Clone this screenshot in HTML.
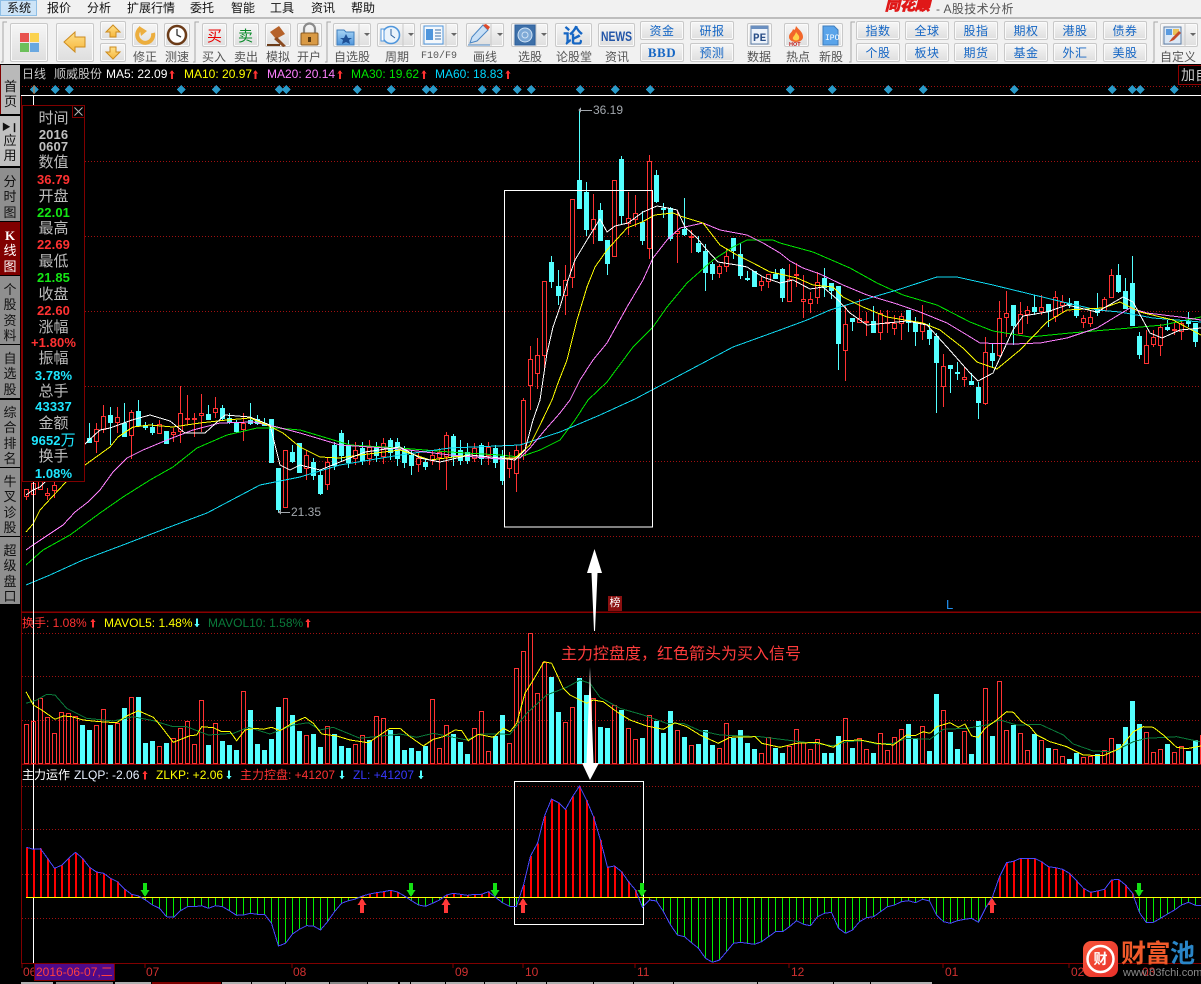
<!DOCTYPE html>
<html lang="zh"><head><meta charset="utf-8"><title>同花顺 - A股技术分析</title>
<style>
html,body{margin:0;padding:0;background:#000;width:1201px;height:984px;overflow:hidden}
body{position:relative;font-family:"Liberation Sans","WenQuanYi Zen Hei","Noto Sans CJK SC",sans-serif;font-size:12px}
#top{position:absolute;left:0;top:0;width:1201px;height:64px;background:#f1f1f1;overflow:hidden}
.m{position:absolute;top:1px;font-size:12px;line-height:14px;color:#111}
.hl{position:absolute;left:0;top:0;width:37px;height:16px;background:#cde4f7;border:1px solid #8fbfe6;box-sizing:border-box}
.b{position:absolute;box-sizing:border-box;border:1px solid #c9c9c9;border-radius:2px;background:linear-gradient(#f6f6f6,#dedede);box-shadow:inset 0 0 0 1px #fafafa}
.t{color:#1566c4;font-size:12px;line-height:19px;text-align:center;height:19px;width:44px;letter-spacing:.5px}
.l{position:absolute;top:50px;width:60px;text-align:center;font-size:12px;line-height:14px;color:#555}
.txt{position:absolute;white-space:nowrap;line-height:14px;font-size:12px}
.side{position:absolute;left:0;width:20px;box-sizing:border-box;text-align:center;color:#111;font-size:13px;line-height:15.3px;background:#8f8f8f;padding-top:6px}
.p,.n{position:absolute;left:22px;width:63px;text-align:center;white-space:nowrap}
.p{font-size:15px;line-height:16px;color:#bdbdbd}
.n{font-size:13px;line-height:14px;font-weight:bold;letter-spacing:.1px}
.r{color:#ff3232}.g{color:#14e614}.c{color:#1ee6ff}.w{color:#c0c0c0}
svg{position:absolute;left:0;top:0}
</style></head><body>
<svg id="chart" width="1201" height="984" shape-rendering="crispEdges"></svg>

<div id="top">
<div class="hl"></div>
<div class="m" style="left:7px">系统</div><div class="m" style="left:47px">报价</div><div class="m" style="left:87px">分析</div><div class="m" style="left:127px">扩展行情</div><div class="m" style="left:190px">委托</div><div class="m" style="left:231px">智能</div><div class="m" style="left:270px">工具</div><div class="m" style="left:311px">资讯</div><div class="m" style="left:351px">帮助</div>
<div style="position:absolute;left:885px;top:-2px;width:48px;height:15px;color:#e01818;-webkit-text-stroke:1px #e01818;font:italic bold 15px/16px 'Liberation Sans','WenQuanYi Zen Hei','Noto Sans CJK SC',sans-serif;white-space:nowrap;overflow:hidden">同花顺</div>
<div class="txt" style="left:936px;top:2px;color:#555;letter-spacing:.4px">- A股技术分析</div>
<div style="position:absolute;left:0;top:17px;width:1201px;height:2px;background:#bdbdbd"></div>

<div class="b" style="left:10px;top:23px;width:38px;height:39px"></div>
<div class="b" style="left:56px;top:23px;width:38px;height:39px"></div>
<div class="b" style="left:100px;top:21px;width:26px;height:19px"></div>
<div class="b" style="left:100px;top:43px;width:26px;height:19px"></div>
<div class="b" style="left:132px;top:23px;width:26px;height:24px"></div>
<div class="b" style="left:164px;top:23px;width:26px;height:24px"></div>
<div class="b" style="left:202px;top:23px;width:25px;height:24px"></div>
<div class="b" style="left:233px;top:23px;width:26px;height:24px"></div>
<div class="b" style="left:265px;top:23px;width:26px;height:24px"></div>
<div class="b" style="left:297px;top:23px;width:25px;height:24px"></div>
<div class="b" style="left:333px;top:23px;width:38px;height:24px"></div>
<div class="b" style="left:377px;top:23px;width:38px;height:24px"></div>
<div class="b" style="left:420px;top:23px;width:38px;height:24px"></div>
<div class="b" style="left:466px;top:23px;width:38px;height:24px"></div>
<div class="b" style="left:511px;top:23px;width:37px;height:24px"></div>
<div class="b" style="left:555px;top:23px;width:37px;height:24px"></div>
<div class="b" style="left:598px;top:23px;width:37px;height:24px"></div>
<div class="b t" style="left:640px;top:21px">资金</div>
<div class="b t" style="left:640px;top:43px;font:bold 13px/18px 'Liberation Serif',serif">BBD</div>
<div class="b t" style="left:690px;top:21px">研报</div>
<div class="b t" style="left:690px;top:43px">预测</div>
<div class="b" style="left:747px;top:23px;width:25px;height:24px"></div>
<div class="b" style="left:784px;top:23px;width:25px;height:24px"></div>
<div class="b" style="left:818px;top:23px;width:25px;height:24px"></div>
<div class="b t" style="left:856px;top:21px">指数</div><div class="b t" style="left:905px;top:21px">全球</div><div class="b t" style="left:954px;top:21px">股指</div><div class="b t" style="left:1004px;top:21px">期权</div><div class="b t" style="left:1053px;top:21px">港股</div><div class="b t" style="left:1103px;top:21px">债券</div>
<div class="b t" style="left:856px;top:43px">个股</div><div class="b t" style="left:905px;top:43px">板块</div><div class="b t" style="left:954px;top:43px">期货</div><div class="b t" style="left:1004px;top:43px">基金</div><div class="b t" style="left:1053px;top:43px">外汇</div><div class="b t" style="left:1103px;top:43px">美股</div>
<div class="b" style="left:1160px;top:23px;width:38px;height:24px"></div>

<div class="l" style="left:115px">修正</div><div class="l" style="left:147px">测速</div><div class="l" style="left:184px">买入</div><div class="l" style="left:216px">卖出</div><div class="l" style="left:248px">模拟</div><div class="l" style="left:279px">开户</div>
<div class="l" style="left:322px">自选股</div><div class="l" style="left:367px">周期</div><div class="l" style="left:409px;font:10px/14px 'Liberation Mono',monospace">F10/F9</div><div class="l" style="left:455px">画线</div><div class="l" style="left:500px">选股</div><div class="l" style="left:544px">论股堂</div><div class="l" style="left:587px">资讯</div><div class="l" style="left:729px">数据</div><div class="l" style="left:768px">热点</div><div class="l" style="left:801px">新股</div><div class="l" style="left:1148px">自定义</div>

<svg width="1201" height="64">
<defs><linearGradient id="yl" x1="0" y1="0" x2="0" y2="1"><stop offset="0" stop-color="#ffe08a"/><stop offset="1" stop-color="#f6b73c"/></linearGradient>
<linearGradient id="bl" x1="0" y1="0" x2="0" y2="1"><stop offset="0" stop-color="#a8d4f5"/><stop offset="1" stop-color="#4f96dc"/></linearGradient></defs>
<g fill="none" stroke="#a8a8a8"><path d="M7 22H3V62H1M193 62H195V22H199M325 62H327V22H331M849 62H851V22H855M1152 62H1154V22H1158"/></g>
<rect x="20" y="33" width="9" height="9" fill="#e8534f"/><rect x="30" y="33" width="9" height="9" fill="#fbd24e"/><rect x="20" y="43" width="9" height="9" fill="#6cc05a"/><rect x="30" y="43" width="9" height="9" fill="#6aa8e0"/>
<path d="M64 42L75 32V37H85V47H75V52Z" fill="url(#yl)" stroke="#cc8b1e"/>
<path d="M113 25L120 32H116V37H110V32H106Z" fill="url(#yl)" stroke="#cc8b1e"/>
<path d="M113 59L120 52H116V47H110V52H106Z" fill="url(#yl)" stroke="#cc8b1e"/>
<path d="M141 28A8 8 0 1 0 153 33" fill="none" stroke="#ecae3e" stroke-width="4"/><path d="M139 26L147 31L141 36Z" fill="#ecae3e"/>
<circle cx="177" cy="35" r="9" fill="#fff" stroke="#6b3b18" stroke-width="2.5"/><path d="M177 29V35L181 37" stroke="#333" fill="none" stroke-width="1.3"/>
<text x="207" y="41" font-size="15" fill="#e80000">买</text>
<text x="238" y="41" font-size="15" fill="#0a8a2a">卖</text>
<path d="M270 32L279 26L285 34L276 39Z" fill="#b6622a"/><path d="M277 37L286 46L283 47L274 39Z" fill="#8a4a20"/><rect x="267" y="44" width="13" height="2" fill="#6b3b18"/>
<path d="M304 33V29A5 5 0 0 1 315 29V33" fill="none" stroke="#8a8a8a" stroke-width="2.2"/><rect x="301" y="33" width="17" height="12" rx="1" fill="#d99a45" stroke="#8a5a20"/><rect x="308" y="37" width="3" height="5" fill="#5a3a10"/>
<path d="M337 30H344L346 32H354V45H337Z" fill="url(#bl)" stroke="#3d7dbd"/><path d="M346 34L348 38H352L349 40L350 44L346 42L342 44L343 40L340 38H344Z" fill="#1e4f95"/>
<path d="M364 33H370L367 36Z M408 33H414L411 36Z M451 33H457L454 36Z M497 33H503L500 36Z M541 33H547L544 36Z M1190 33H1196L1193 36Z" fill="#666"/>
<path d="M359 24V46M403 24V46M446 24V46M491 24V46M536 24V46M1185 24V46" stroke="#c9c9c9"/>
<circle cx="391" cy="35" r="8.5" fill="#eaf3fb" stroke="#4f96dc" stroke-width="1.6"/><path d="M391 29V35L395 38" stroke="#2c5f9d" fill="none"/><rect x="381" y="29" width="3" height="12" fill="#fff" stroke="#4f96dc"/>
<rect x="424" y="26" width="19" height="18" fill="#f4f8fc" stroke="#4f96dc"/><rect x="426" y="29" width="7" height="11" fill="#4f96dc"/><path d="M435 30H441M435 33H441M435 36H441M435 39H441" stroke="#3d6fa8"/>
<path d="M470 43L472 37L483 25L488 30L477 41Z" fill="#c9e0f6" stroke="#4a86c4"/><path d="M483 25L488 30L490 27L486 24Z" fill="#e04a2a"/><path d="M468 45H490" stroke="#4a86c4"/>
<rect x="515" y="25" width="20" height="20" fill="#3d6fa8" stroke="#2c5f9d"/><circle cx="525" cy="35" r="7" fill="#7ea9d6" stroke="#cfe2f5"/><circle cx="525" cy="35" r="3" fill="none" stroke="#cfe2f5"/>
<text x="563" y="43" font-size="20" font-weight="bold" fill="#1566c4">论</text>
<text x="601" y="41" font-family="Liberation Sans" font-size="14" font-weight="bold" fill="#2255a8" textLength="31" lengthAdjust="spacingAndGlyphs">NEWS</text>
<path d="M751 26H768V44H751Z" fill="#eef3fa" stroke="#5f7fa8"/><rect x="751" y="26" width="17" height="3" fill="#6a8fc0"/><text x="753" y="41" font-family="Liberation Mono" font-size="11" font-weight="bold" fill="#2a4f88">PE</text>
<path d="M796 26C799 30 803 32 803 37C803 40 800 42 796 42C792 42 789 40 789 37C789 33 792 33 793 29C794 30 795 31 796 26Z" fill="#f2672a"/><path d="M796 32C798 35 800 36 799 39C798 41 794 41 793 39C792 37 795 36 796 32Z" fill="#ffd24a"/><text x="789" y="46" font-family="Liberation Sans" font-size="5.5" font-weight="bold" fill="#c02020">HOT</text>
<path d="M823 26H834L838 30V45H823Z" fill="#5aa4ea" stroke="#3d7dbd"/><text x="825" y="40" font-family="Liberation Mono" font-size="8" fill="#fff">IPO</text>
<rect x="1164" y="27" width="17" height="17" fill="#dce8f5" stroke="#5f7fa8"/><rect x="1166" y="29" width="6" height="6" fill="#5a9be0"/><rect x="1173" y="29" width="6" height="6" fill="#e9c25a"/><path d="M1169 42L1172 38L1179 31L1181 33L1174 40Z" fill="#c44a2a"/>
</svg>
</div>

<div class="side" style="top:65px;height:49px;background:#b9b9b9;border-left:1px solid #800000;padding-top:14px">首<br>页</div>
<div class="side" style="top:116px;height:50px;background:#c0c0c0;padding-top:5px"><span style="font-size:9px;line-height:12px;display:block">▶❙</span>应<br>用</div>
<div class="side" style="top:168px;height:53px">分<br>时<br>图</div>
<div class="side" style="top:222px;height:53px;background:#800000;color:#fff"><b style="font-family:'Liberation Serif',serif">K</b><br>线<br>图</div>
<div class="side" style="top:276px;height:68px">个<br>股<br>资<br>料</div>
<div class="side" style="top:345px;height:53px">自<br>选<br>股</div>
<div class="side" style="top:400px;height:67px;padding-top:5px">综<br>合<br>排<br>名</div>
<div class="side" style="top:468px;height:68px">牛<br>叉<br>诊<br>股</div>
<div class="side" style="top:537px;height:67px">超<br>级<br>盘<br>口</div>

<div class="txt" style="left:22px;top:67px;color:#c8c8c8">日线</div>
<div class="txt" style="left:54px;top:67px;color:#c8c8c8">顺威股份</div>
<div class="txt" style="left:106px;top:67px;color:#fff">MA5: 22.09</div>
<div class="txt" style="left:184px;top:67px;color:#ffff00">MA10: 20.97</div>
<div class="txt" style="left:267px;top:67px;color:#ff80ff">MA20: 20.14</div>
<div class="txt" style="left:351px;top:67px;color:#00e600">MA30: 19.62</div>
<div class="txt" style="left:435px;top:67px;color:#00d8ff">MA60: 18.83</div>
<div style="position:absolute;left:1178px;top:65px;width:30px;height:20px;box-sizing:border-box;border:1px solid #900000;color:#c8c8c8;font-size:14px;line-height:18px;padding-left:2px;white-space:nowrap;overflow:hidden">加自</div>

<div class="txt" style="left:22px;top:616px;color:#ff3232">换手: 1.08%</div>
<div class="txt" style="left:104px;top:616px;color:#ffff00">MAVOL5: 1.48%</div>
<div class="txt" style="left:208px;top:616px;color:#0a7a3a">MAVOL10: 1.58%</div>
<div class="txt" style="left:22px;top:768px;color:#fff">主力运作</div>
<div class="txt" style="left:74px;top:768px;color:#e8f0ff">ZLQP: -2.06</div>
<div class="txt" style="left:156px;top:768px;color:#ffff00">ZLKP: +2.06</div>
<div class="txt" style="left:240px;top:768px;color:#ff3232">主力控盘: +41207</div>
<div class="txt" style="left:353px;top:768px;color:#3838ff">ZL: +41207</div>

<div class="txt" style="left:593px;top:103px;color:#a3a8ae">36.19</div>
<div class="txt" style="left:291px;top:505px;color:#a3a8ae">21.35</div>
<div style="position:absolute;left:608px;top:596px;width:14px;height:15px;background:#8a1010;color:#fff;font-size:11px;line-height:15px;text-align:center">榜</div>
<div class="txt" style="left:946px;top:598px;color:#2090f0;font-size:13px">L</div>
<div class="txt" style="left:561px;top:646px;color:#ff3c3c;font-size:16px;line-height:18px">主力控盘度，红色箭头为买入信号</div>

<div style="position:absolute;left:22px;top:105px;width:63px;height:377px;background:#000;border:1px solid #800000;box-sizing:border-box"></div>
<svg width="1201" height="984" style="pointer-events:none"><path d="M72.5 105.5H84.5V117.5H72.5Z" fill="none" stroke="#800000"/><path d="M74.5 107.5L82.5 115.5M82.5 107.5L74.5 115.5" stroke="#bbb" fill="none"/></svg>
<div class="p" style="top:111px">时间</div><div class="n w" style="top:128px">2016</div><div class="n w" style="top:140px">0607</div>
<div class="p" style="top:155px">数值</div><div class="n r" style="top:173px">36.79</div>
<div class="p" style="top:189px">开盘</div><div class="n g" style="top:206px">22.01</div>
<div class="p" style="top:221px">最高</div><div class="n r" style="top:238px">22.69</div>
<div class="p" style="top:254px">最低</div><div class="n g" style="top:271px">21.85</div>
<div class="p" style="top:287px">收盘</div><div class="n r" style="top:304px">22.60</div>
<div class="p" style="top:320px">涨幅</div><div class="n r" style="top:336px">+1.80%</div>
<div class="p" style="top:351px">振幅</div><div class="n c" style="top:369px">3.78%</div>
<div class="p" style="top:384px">总手</div><div class="n c" style="top:400px">43337</div>
<div class="p" style="top:416px">金额</div><div class="n c" style="top:434px">9652<span style="font-weight:normal;font-size:15px">万</span></div>
<div class="p" style="top:449px">换手</div><div class="n c" style="top:467px">1.08%</div>

<div class="txt" style="left:23px;top:965px;color:#d03030">06</div>
<div style="position:absolute;left:34px;top:963px;width:81px;height:18px;box-sizing:border-box;background:#4f0a8a;border:1px solid #800000;color:#ff4040;font-size:12px;line-height:16px;white-space:nowrap;padding-left:1px">2016-06-07,二</div>
<div class="txt" style="left:146px;top:965px;color:#d03030">07</div><div class="txt" style="left:293px;top:965px;color:#d03030">08</div><div class="txt" style="left:455px;top:965px;color:#d03030">09</div><div class="txt" style="left:525px;top:965px;color:#d03030">10</div><div class="txt" style="left:637px;top:965px;color:#d03030">11</div><div class="txt" style="left:791px;top:965px;color:#d03030">12</div><div class="txt" style="left:945px;top:965px;color:#d03030">01</div><div class="txt" style="left:1071px;top:965px;color:#d03030">02</div><div class="txt" style="left:1142px;top:965px;color:#d03030">03</div>

<svg width="1201" height="984" style="pointer-events:none">
<defs><linearGradient id="wm" x1="0" y1="0" x2="1" y2="1"><stop offset="0" stop-color="#f8563a"/><stop offset="1" stop-color="#e8302a"/></linearGradient></defs>
<rect x="1083" y="941" width="35" height="36" rx="8" fill="url(#wm)"/>
<circle cx="1100.5" cy="959" r="13" fill="none" stroke="#fff" stroke-width="2.5"/>
<text x="1100.5" y="964" text-anchor="middle" font-size="14" font-weight="bold" fill="#fff">财</text>
</svg>
<div style="position:absolute;left:1121px;top:939px;font-size:25px;line-height:30px;font-weight:bold;white-space:nowrap;letter-spacing:-.5px;color:#f05a2a">财富<span style="color:#2a86c8">池</span></div>
<div class="txt" style="left:1123px;top:966px;color:#8a8a8a;font-size:11px">www.03fchi.com</div>

<script>
const X=i=>26.5+7*i,RED='#ff3232',CY='#54ffff';let s='';
const dot=(y,x0=22)=>`<path d="M${x0} ${y+.5}H1201" stroke="#a01010" stroke-dasharray="1 2" fill="none"/>`;
[161,236,311,386,461,536,86,633,676,720,786,829,874,918].forEach(y=>s+=dot(y));
const C=[[1,489,496,489,500],[1,483,494,480,500],[1,475,489,470,490],[1,493,495,488,500],[1,485,490,482,498],[1,470,478,465,481],[1,460,470,455,475],[1,450,460,445,465],[1,445,455,440,458],
[0,438,442,423,443],[1,429,441,423,453],[1,416,429,405,433],[0,415,422,407,445],[1,417,422,407,433],[0,423,436,403,436],[1,412,435,410,459],[0,411,425,400,425],[0,425,427,422,430],[0,427,432,423,435],[1,424,433,420,433],[0,431,443,431,443],[1,432,434,428,442],[1,413,431,386,443],[1,418,419,395,425],[1,418,419,413,437],[1,413,415,394,432],[0,414,419,405,420],[1,408,412,397,418],[0,408,418,405,420],[0,418,422,413,424],[0,423,431,420,433],[1,423,429,413,441],[0,420,423,403,425],[0,419,423,415,425],[0,423,425,418,425],[0,419,462,419,462],[0,468,509,468,513],[1,450,507,450,507],[0,452,461,445,463],[0,443,472,443,472],
[1,455,468,450,480],[0,462,475,458,480],[0,475,493,470,495],[1,462,484,458,490],[0,445,465,442,470],[0,433,455,430,462],[0,445,462,440,468],[1,450,458,442,465],[0,448,460,442,465],[1,447,458,440,465],[0,448,455,442,462],[1,443,456,438,464],[0,440,452,438,460],[0,442,458,438,466],[0,450,462,446,468],[0,455,465,450,475],[1,458,464,452,472],[0,462,466,458,470],[1,455,460,450,465],[1,452,457,448,470],[1,435,456,432,490],[0,436,456,434,466],[0,450,460,440,465],[0,452,460,443,464],[1,448,458,443,462],[0,445,458,443,465],[1,447,455,442,465],[0,448,462,445,468],[0,456,480,450,485],[1,458,468,452,478],[1,450,473,445,492],[1,400,455,398,460],
[1,359,385,346,410],[1,355,373,338,389],[1,281,355,281,369],[0,262,281,256,288],[0,286,295,270,305],[1,280,295,265,315],[1,199,277,199,288],[0,180,208,110,208],[0,192,229,182,236],[1,219,229,194,244],[0,210,240,203,240],[0,240,263,240,275],[1,180,256,180,256],[0,159,215,156,224],[1,218,223,192,235],[1,213,219,195,227],[0,222,240,211,245],[1,161,248,155,259],[0,175,201,170,203],[0,208,209,203,218],[0,208,238,207,241],[1,231,233,210,263],[0,229,234,198,236],[1,236,237,230,253],[0,243,251,236,253],[0,251,272,244,291],[0,264,273,262,280],[1,266,273,264,278],[1,256,266,248,272],[0,238,250,238,259],[0,254,275,243,279],[0,278,279,271,281],[0,271,286,271,286],[1,281,285,277,291],[1,274,281,274,288],[0,274,278,269,278],
[0,269,297,268,302],[1,279,301,264,301],[1,274,275,263,287],[1,299,301,275,318],[1,299,303,292,313],[1,282,297,272,304],[0,278,287,268,297],[0,283,290,283,299],[0,286,343,286,370],[1,324,350,305,381],[0,318,321,318,331],[1,318,322,299,322],[1,321,322,312,336],[0,321,332,306,332],[1,313,332,310,340],[1,322,323,310,333],[1,323,328,315,335],[1,316,323,313,340],[0,310,322,310,332],[0,323,331,317,346],[1,323,331,305,340],[0,330,338,323,345],[0,336,362,333,413],[1,366,386,354,407],[0,365,368,365,393],[0,372,373,362,380],[1,377,379,367,387],[0,381,384,373,384],[0,387,402,382,419],[1,352,403,337,405],[0,353,360,344,368],[1,318,355,301,357],[1,313,317,291,337],[0,305,325,305,345],[1,314,333,302,333],[1,310,314,306,324],[0,307,311,295,315],[1,307,311,295,315],[0,304,311,304,327],[1,297,316,291,322],[1,302,305,295,313],[0,303,304,298,308],[0,301,315,301,318],[1,318,322,315,328],[1,317,323,311,327],[0,309,312,293,316],[1,299,310,297,310],[1,275,297,269,297],[0,275,291,264,293],[0,291,308,278,308],[0,283,325,256,325],[0,336,354,332,359],[1,345,363,330,363],[1,337,344,330,347],[1,327,345,324,356],[0,327,329,320,331],[1,329,330,322,335],[1,323,331,321,340],[0,321,323,312,327],[0,323,341,323,347]];
C.forEach((c,i)=>{const x=X(i),col=c[0]?RED:CY;
 s+=`<path d="M${x} ${c[3]}V${c[1]}M${x} ${c[2]}V${c[4]}" stroke="${col}" fill="none"/>`;
 if(c[0])s+=`<rect x="${x-2}" y="${c[1]+.5}" width="4" height="${c[2]-c[1]}" fill="#000" stroke="${col}"/>`;
 else s+=`<rect x="${x-2.5}" y="${c[1]}" width="5" height="${c[2]-c[1]+1}" fill="${col}"/>`;});
const line=(a,col)=>{let p='';for(let k=0;k<a.length;k+=2)p+=a[k]+','+a[k+1]+' ';return `<polyline points="${p}" fill="none" stroke="${col}" stroke-width="1"/>`};
s+=line([26,565,43,550,70,535,100,513,123,497,150,480,173,467,197,448,227,435,257,428,277,428,300,430,350,445,400,448,450,452,500,455,520,457,540,450,560,440,575,420,588,400,607,382,633,347,653,327,667,307,687,283,713,260,733,247,747,240,773,240,780,243,813,252,850,268,877,283,903,295,937,305,970,322,993,331,1030,337,1070,333,1130,328,1163,325,1201,317],'#00e600');
s+=line([26,585,50,575,83,560,123,545,167,528,207,513,260,485,300,477,340,465,400,455,450,448,520,445,560,432,600,415,635,399,652,390,733,347,780,330,807,320,830,310,863,300,897,290,937,277,957,277,993,285,1030,294,1063,302,1097,310,1120,312,1153,318,1201,322],'#10d8f0');
s+=line([26,550,33,545,48,535,63,525,75,512,88,502,100,490,113,472,127,458,143,450,167,440,193,430,220,423,253,422,277,427,300,433,340,445,400,449,450,455,500,459,520,458,530,448,545,430,560,413,570,400,580,380,593,360,607,343,627,307,643,280,653,258,667,240,680,228,703,223,720,230,747,235,763,243,780,253,790,261,803,268,820,274,843,285,867,295,897,304,920,312,947,323,967,335,980,343,1013,344,1040,343,1067,338,1097,328,1130,308,1147,313,1180,317,1201,320],'#ff80ff');
s+=line([26,532,33,524,40,510,65,483,85,465,110,447,118,437,133,427,150,425,173,427,200,423,227,420,250,418,267,425,283,433,300,447,320,457,340,458,360,455,400,450,430,460,470,455,500,458,515,458,530,445,540,425,552,400,558,383,567,360,577,320,587,287,595,267,607,250,627,228,642,222,655,215,673,213,683,217,703,223,720,245,737,255,753,263,770,272,780,274,797,278,813,285,833,287,843,297,863,307,887,317,923,323,940,330,963,348,977,362,997,369,1020,350,1047,322,1067,310,1103,308,1120,302,1140,312,1173,320,1201,335],'#ffff00');
s+=line([26,495,33,490,40,487,89,440,100,430,110,428,132,420,150,415,170,421,185,433,205,433,225,415,250,417,270,425,280,465,290,470,300,465,320,470,340,462,365,452,400,447,420,458,440,462,470,455,500,458,515,460,525,450,533,420,540,400,547,353,553,327,560,307,568,280,575,260,587,240,600,219,607,232,615,226,628,223,643,212,657,206,663,207,677,210,685,227,697,238,707,250,718,262,737,265,747,267,763,277,780,283,793,280,810,289,823,287,838,300,850,313,867,325,907,321,927,325,947,347,970,373,978,381,993,373,1013,330,1023,316,1047,312,1067,305,1097,312,1123,297,1133,302,1150,333,1162,338,1180,330,1201,328],'#ffffff');
s+=`<path d="M21.5 96V963M21 612.5H1201M21 764.5H1201M21 963.5H1201M145 963V968M292 963V968M453 963V968M523 963V968M635 963V968M789 963V968M943 963V968M1069 963V968M22 963V968" stroke="#800000" fill="none"/><path d="M21 612H1201M21 764H1201" stroke="#900000" fill="none"/>`;
s+=`<path d="M21 95.5H1201M33.5 96V963M504.5 190.5H652.5V527H504.5ZM514.5 781.5H643.5V924.5H514.5Z" stroke="#fff" fill="none"/>`;
[34,55,69,181,216,279,286,357,391,426,433,482,496,517,531,580,615,650,790,832,888,923,1014,1112,1132,1140,1174].forEach(x=>s+=`<path d="M${x} 85L${x+4.5} 89.5L${x} 94L${x-4.5} 89.5Z" fill="#2a9ac8"/>`);
s+=`<path d="M34 85V94" stroke="#e07830"/>`;
const V=[343,334,265,322,370,307,310,318,-345,-360,346,298,-345,340,-294,262,-261,-399,-393,409,-399,384,355,334,403,271,-405,340,-393,-405,-420,244,-300,-402,-420,-387,-291,265,-315,-363,376,-372,-411,349,-372,-408,-414,403,376,-390,319,325,-360,-377,-420,-414,-423,-408,268,415,346,-372,-396,-432,355,304,424,-378,-315,400,175,124,70,250,157,-201,-306,337,292,-204,-255,265,-351,-354,286,-300,355,388,-384,316,-334,-369,-303,361,-381,406,-402,-361,-405,415,340,-384,-360,-399,-417,430,382,-414,-429,408,358,397,418,388,-429,-429,-378,325,-414,385,418,-429,370,421,382,358,-342,-384,349,-423,-252,301,-366,-417,364,-432,-333,235,-378,214,361,-345,370,421,-372,391,-414,418,439,-447,-429,442,439,-433,421,385,-402,-351,-273,-342,367,427,418,-402,427,409,-423,-390,376];
V.forEach((v,i)=>{const x=X(i),t=Math.round(610+Math.abs(v)/3);
 if(v>0)s+=`<rect x="${x-2}" y="${t+.5}" width="4" height="${763-t}" fill="none" stroke="${RED}"/>`;
 else s+=`<rect x="${x-2.5}" y="${t}" width="5" height="${764-t}" fill="${CY}"/>`;});
const Z=(off,a)=>{let o=[];for(let k=0;k<a.length;k+=2)o.push(+(off+a[k]/3).toFixed(1),+(610+a[k+1]/3).toFixed(1));return o};
s+=line([...Z(0,[78,280,110,270,140,253,165,255,200,295,260,325,340,333,400,320,460,332,520,350,560,350,625,375,700,370,745,352,810,372,880,345,925,338,960,360,1000,352,1080,385,1200,372]),...Z(400,[50,382,100,370,200,390,240,372,330,373,380,310,440,255,500,232,540,210,570,220,600,262,660,295,730,315,800,340,850,340,900,362,960,375,1080,380,1200,395]),...Z(800,[100,407,140,395,190,392,230,402,280,400,320,385,390,388,430,358,500,355,560,345,600,330,650,345,720,343,790,375,820,402,880,423,940,425,1000,395,1040,385,1130,380,1200,395])],'#0a7a3a');
s+=line([...Z(0,[78,245,100,285,125,300,165,328,190,318,215,320,250,330,300,335,350,338,380,318,415,302,460,322,480,345,520,397,570,377,590,375,605,350,640,353,665,365,690,365,710,392,735,360,765,355,790,358,815,352,840,362,880,338,915,322,940,340,965,372,1010,378,1050,390,1105,398,1135,378,1170,355,1200,355]),...Z(400,[30,380,70,408,100,388,130,380,165,360,185,362,205,392,235,373,280,382,310,355,330,365,350,340,375,250,400,210,432,155,455,160,490,235,510,255,560,280,580,270,610,275,650,305,690,330,740,348,790,358,825,338,860,350,900,375,955,400,990,382,1065,380,1085,400,1140,412,1190,400]),...Z(800,[50,397,100,412,130,392,180,390,230,400,280,405,320,375,345,377,370,365,390,370,410,350,450,338,475,352,495,342,515,378,535,382,555,355,590,330,620,305,640,307,665,335,690,350,710,375,750,395,800,410,850,435,910,437,960,415,1000,365,1030,350,1060,352,1090,375,1130,412,1160,416,1203,408])],'#ffff00');
const L=[172,178,176,205,235,226,205,187,205,232,246,250,265,275,297,313,318,330,345,355,380,382,362,350,350,347,355,347,350,362,376,375,370,373,373,400,468,460,432,418,407,408,420,395,365,340,332,327,318,312,308,305,301,306,318,332,345,349,340,330,315,310,313,316,313,313,305,322,338,349,349,285,198,160,78,27,38,58,20,-12,30,80,150,232,228,245,275,300,352,330,333,365,405,435,440,458,475,505,517,510,485,460,457,460,463,455,440,425,425,410,392,403,407,380,370,367,415,430,420,395,383,380,365,350,345,335,332,338,328,333,375,395,400,392,388,385,397,355,320,260,218,214,205,205,205,215,230,233,238,250,272,295,307,303,298,270,268,285,310,368,398,397,385,372,360,345,337,346,346];
const Y=z=>790+z/3;let pts=[];
L.forEach((z,i)=>{const x=X(i);pts.push(x,+Y(z).toFixed(1));
 if(z<322)s+=`<rect x="${x-.5}" y="${Y(z)}" width="2" height="${897-Y(z)}" fill="#ff0000"/>`;
 else if(z>322)s+=`<path d="M${x} 897V${Y(z)}" stroke="#00ee00" fill="none"/>`;});
s+=`<path d="M26 897.5H1201" stroke="#ffff00" fill="none"/>`;
s+=line(pts,'#4848ff');
const big=(x,col,up)=>up?`<path d="M${x} 898L${x+4.5} 905H${x+2}V913H${x-2}V905H${x-4.5}Z" fill="${col}"/>`:`<path d="M${x} 897L${x+4.5} 890H${x+2}V883H${x-2}V890H${x-4.5}Z" fill="${col}"/>`;
[145,411,495,642,1139].forEach(x=>s+=big(x,'#14e014',0));
[362,446,523,992].forEach(x=>s+=big(x,'#ff3838',1));
const ar=(x,y,col,up)=>up?`<path d="M${x} ${y-4.5}L${x+2.5} ${y-1}H${x+1}V${y+4.5}H${x-1}V${y-1}H${x-2.5}Z" fill="${col}"/>`:`<path d="M${x} ${y+4.5}L${x+2.5} ${y+1}H${x+1}V${y-4.5}H${x-1}V${y+1}H${x-2.5}Z" fill="${col}"/>`;
[172,255.5,340,424,508].forEach(x=>s+=ar(x,74.5,'#ff3232',1));
s+=ar(93,623,'#ff3232',1)+ar(197,623,CY,0)+ar(308,623,'#ff3232',1)+ar(145,775,'#ff3232',1)+ar(229,775,CY,0)+ar(342,775,CY,0)+ar(421,775,CY,0);
s+=`<path d="M579 110.5H592M278 512.5H290" stroke="#a3a8ae" fill="none"/><path d="M578 110L581 107V113ZM278 512L281 509V515Z" fill="#a3a8ae"/>`;
s+=`<g shape-rendering="auto"><path d="M594.5 549L602 573H597.5L595 631H594L591.5 573H587Z" fill="#fff"/><path d="M590 667L593.5 763H599L590 780L582 763H586.5Z" fill="#fff"/></g>`;
[[21,53,'#b0b0b0'],[56,113,'#8a8a8a'],[115,151,'#b0b0b0'],[152,221,'#800000'],[222,251,'#b0b0b0'],[252,285,'#b0b0b0'],[286,329,'#b0b0b0'],[330,367,'#8a8a8a'],[368,398,'#b0b0b0'],[400,410,'#b0b0b0'],[411,445,'#b0b0b0'],[446,484,'#b0b0b0'],[485,516,'#b0b0b0'],[517,546,'#b0b0b0'],[547,593,'#b0b0b0'],[594,633,'#b0b0b0'],[634,673,'#b0b0b0'],[674,757,'#b0b0b0'],[758,833,'#b0b0b0'],[834,870,'#b0b0b0'],[871,932,'#b0b0b0']].forEach(r=>s+=`<rect x="${r[0]}" y="982" width="${r[1]-r[0]}" height="2" fill="${r[2]}"/>`);
document.getElementById('chart').innerHTML=s;
</script>
</body></html>
